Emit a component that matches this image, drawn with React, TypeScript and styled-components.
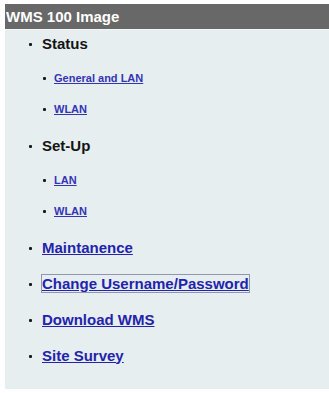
import React from "react";
import styled, { createGlobalStyle } from "styled-components";

const Global = createGlobalStyle`
  html, body { margin: 0; padding: 0; background: #ffffff; }
  body { font-family: "Liberation Sans", Arial, sans-serif; }
`;

const Page = styled.div`
  padding: 4px 0 0 5px;
  width: 329px;
  box-sizing: border-box;
`;

const Header = styled.div`
  height: 25px;
  background: #686868;
  color: #ffffff;
  font-weight: bold;
  font-size: 15px;
  line-height: 25px;
  padding-left: 1px;
  border-bottom: 1px solid #f3f7f8;
`;

const Panel = styled.div`
  background: #e6eef0;
  padding: 3px 0 24px 24px;
  display: flex;
  flex-direction: column;
  gap: 16px;
`;

const Section = styled.div`
  display: flex;
  flex-direction: column;
`;

const SubList = styled.div`
  display: flex;
  flex-direction: column;
  gap: 11px;
  padding: 15px 0 0 14px;
`;

const Row = styled.div<{ $sub?: boolean }>`
  height: 20px;
  display: flex;
  align-items: center;
  gap: ${(p) => (p.$sub ? "8px" : "10px")};
`;

const Bullet = styled.span<{ $sub?: boolean }>`
  width: 3px;
  height: 3px;
  margin-top: ${(p) => (p.$sub ? "1px" : "2px")};
  background: #1a1a1a;
  border-radius: 1px;
  flex: none;
`;

const Heading = styled.span`
  font-size: 15px;
  font-weight: bold;
  color: #141414;
`;

const MainLink = styled.a<{ $focused?: boolean }>`
  font-size: 15px;
  font-weight: bold;
  color: #2323ac;
  text-decoration: underline;
  outline: ${(p) => (p.$focused ? "1px solid #8e96b4" : "none")};
  outline-offset: 0px;
`;

const SubLink = styled.a`
  font-size: 11px;
  font-weight: bold;
  color: #3434b4;
  text-decoration: underline;
`;

type Item = { label: string; children?: string[]; focused?: boolean };

const items: Item[] = [
  { label: "Status", children: ["General and LAN", "WLAN"] },
  { label: "Set-Up", children: ["LAN", "WLAN"] },
  { label: "Maintanence" },
  { label: "Change Username/Password", focused: true },
  { label: "Download WMS" },
  { label: "Site Survey" },
];

export default function App() {
  return (
    <>
      <Global />
      <Page>
        <Header>WMS 100 Image</Header>
        <Panel>
          {items.map((it) => (
            <Section key={it.label}>
              <Row>
                <Bullet />
                {it.children ? (
                  <Heading>{it.label}</Heading>
                ) : (
                  <MainLink href="#" $focused={it.focused}>
                    {it.label}
                  </MainLink>
                )}
              </Row>
              {it.children && (
                <SubList>
                  {it.children.map((c) => (
                    <Row $sub key={c}>
                      <Bullet $sub />
                      <SubLink href="#">{c}</SubLink>
                    </Row>
                  ))}
                </SubList>
              )}
            </Section>
          ))}
        </Panel>
      </Page>
    </>
  );
}
